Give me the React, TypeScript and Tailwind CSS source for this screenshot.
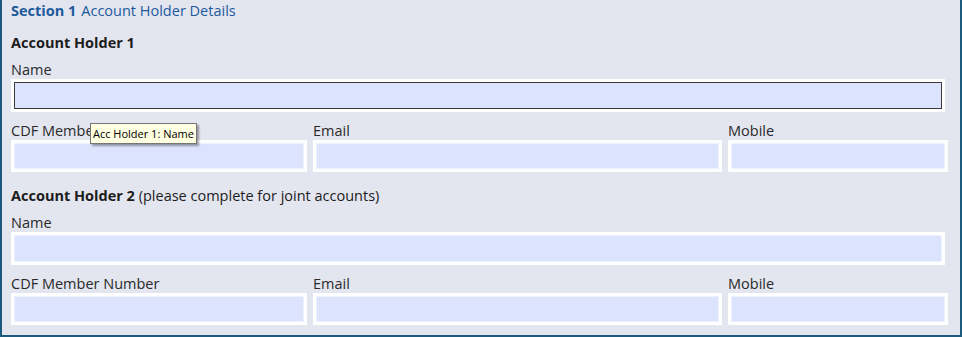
const Field = ({ focused = false, h = 33 }: { focused?: boolean; h?: number }) => {
  return (
    <div className={`${h === 33 ? "h-[33px]" : "h-[32px]"} bg-white p-[3px]`}>
      <div
        className={`h-full w-full bg-[#dce3fd] ${
          focused ? "border border-[#3a3a3a]" : "border border-[#eef1ff]"
        }`}
      />
    </div>
  );
};

const Label = ({ children }: { children: React.ReactNode }) => (
  <div className="text-[14.5px] leading-[18px] text-[#2a2a2a]">{children}</div>
);

const HolderBlock = ({
  title,
  note,
  focused,
  tooltip,
}: {
  title: string;
  note?: string;
  focused?: boolean;
  tooltip?: boolean;
}) => {
  return (
    <div>
      <div className="text-[14.5px] leading-[18px] text-[#1c1c1c]">
        <span className="font-bold">{title}</span>
        {note && <span> {note}</span>}
      </div>
      <div className="mt-[9px]">
        <Label>Name</Label>
      </div>
      <div className="pr-[3px]">
        <Field focused={focused} />
      </div>
      <div className="mt-[10px] grid grid-cols-[296px_409px_220px] gap-x-[6px]">
        <div className="relative">
          <Label>CDF Member Number</Label>
          {tooltip && (
            <div className="absolute left-[79px] top-[1px] z-10 border border-[#767676] bg-[#ffffe1] px-[2px] text-[11px] leading-[19px] text-black shadow-[2px_2px_2px_rgba(0,0,0,0.35)] whitespace-nowrap">
              Acc Holder 1: Name
            </div>
          )}
          <Field h={32} />
        </div>
        <div>
          <Label>Email</Label>
          <Field h={32} />
        </div>
        <div>
          <Label>Mobile</Label>
          <Field h={32} />
        </div>
      </div>
    </div>
  );
};

export default function App() {
  return (
    <div
      className="h-[337px] w-[962px] border-x-2 border-b-2 border-[#1b5a7c] bg-[#e3e5ef] pl-[9px] pr-[12px] pt-[2px]"
      style={{ fontFamily: '"Open Sans", "Noto Sans", sans-serif' }}
    >
      <div className="text-[14.5px] leading-[18px] text-[#1d5a9c]">
        <span className="font-bold">Section 1</span>
        <span className="ml-[5px]">Account Holder Details</span>
      </div>
      <div className="mt-[14px]">
        <HolderBlock title="Account Holder 1" focused tooltip />
      </div>
      <div className="mt-[15px]">
        <HolderBlock
          title="Account Holder 2"
          note="(please complete for joint accounts)"
        />
      </div>
    </div>
  );
}
